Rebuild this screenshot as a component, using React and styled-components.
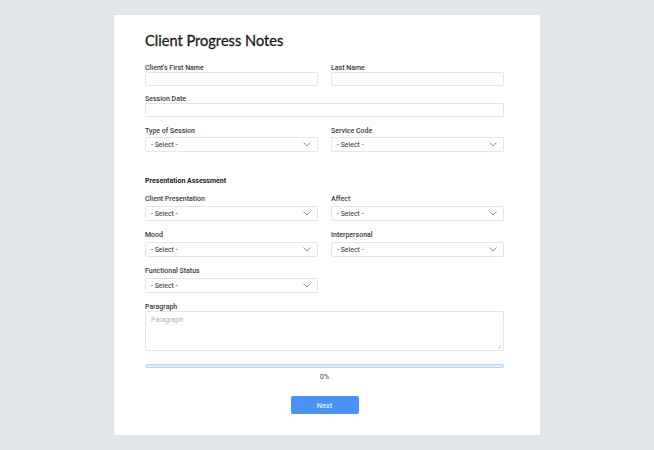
import React from "react";
import styled, { createGlobalStyle } from "styled-components";

const Global = createGlobalStyle`
  html, body { margin: 0; padding: 0; background: #e2e6ea; }
  body { font-family: Roboto, "Liberation Sans", sans-serif; color: #333; }
  * { box-sizing: border-box; }
`;

const Card = styled.div`
  width: 426px;
  height: 420px;
  margin: 15px auto 0;
  background: #fff;
  padding: 16px 36px 0 31px;
  display: flex;
  flex-direction: column;
`;

const Title = styled.h1`
  margin: 0;
  font-family: Lato, Inter, sans-serif;
  font-weight: 400;
  font-size: 14.6px;
  line-height: 20px;
  color: #1a1a1a;
  -webkit-text-stroke: 0.3px #1a1a1a;
`;

const Grid = styled.div`
  display: grid;
  grid-template-columns: ${(p) => (p.$single ? "1fr" : "1fr 1fr")};
  column-gap: 13px;
  margin-top: ${(p) => p.$mt}px;
`;

const Field = styled.div`
  display: flex;
  flex-direction: column;
`;

const Label = styled.label`
  font-size: 7px;
  line-height: 12px;
  font-weight: 500;
  color: #3a3a3a;
  margin-bottom: ${(p) => (p.$mb || 0) - 2}px;
`;

const Input = styled.div`
  height: 14px;
  border: 1px solid #e6e6e6;
  border-radius: 2px;
  background: #fff;
`;

const SelectBox = styled.div`
  height: 15px;
  border: 1px solid #e6e6e6;
  border-radius: 2px;
  background: #fff;
  display: flex;
  align-items: center;
  justify-content: space-between;
  padding: 0 6px 0 5px;
  font-size: 7px;
  color: #333;
`;

const TextArea = styled.div`
  position: relative;
  height: 40px;
  border: 1px solid #e6e6e6;
  border-radius: 2px;
  padding: 3px 5px;
  font-size: 7px;
  line-height: 10px;
  color: #a9b0bb;
`;

const Grip = styled.svg`
  position: absolute;
  right: 1px;
  bottom: 1px;
`;

const SectionTitle = styled.div`
  margin-top: 23px;
  font-size: 7px;
  line-height: 12px;
  margin-bottom: -2px;
  font-weight: 700;
  color: #222;
`;

const Progress = styled.div`
  margin-top: 13px;
  height: 4px;
  border: 1px solid #b9d3fb;
  border-radius: 2px;
  background: #e4eefd;
`;

const Percent = styled.div`
  margin-top: 4px;
  text-align: center;
  font-size: 7px;
  line-height: 11px;
  color: #444;
`;

const Button = styled.button`
  align-self: center;
  margin-top: 13px;
  width: 68px;
  height: 18px;
  border: none;
  border-radius: 2px;
  background: #4a90f7;
  color: #fff;
  font-family: Roboto, sans-serif;
  font-size: 7.5px;
  padding: 0;
`;

const Chevron = () => (
  <svg width="8" height="5" viewBox="0 0 8 5">
    <path d="M0.5 0.5 L4 4 L7.5 0.5" fill="none" stroke="#777" strokeWidth="0.8" />
  </svg>
);

const Select = ({ label, mbLabel = 3 }) => (
  <Field>
    <Label $mb={mbLabel}>{label}</Label>
    <SelectBox>
      <span>- Select -</span>
      <Chevron />
    </SelectBox>
  </Field>
);

const TextField = ({ label }) => (
  <Field>
    <Label>{label}</Label>
    <Input />
  </Field>
);

export default function App() {
  return (
    <>
      <Global />
      <Card>
        <Title>Client Progress Notes</Title>
        <Grid $mt={11}>
          <TextField label="Client's First Name" />
          <TextField label="Last Name" />
        </Grid>
        <Grid $mt={7} $single>
          <TextField label="Session Date" />
        </Grid>
        <Grid $mt={8}>
          <Select label="Type of Session" mbLabel={2} />
          <Select label="Service Code" mbLabel={2} />
        </Grid>
        <SectionTitle>Presentation Assessment</SectionTitle>
        <Grid $mt={8}>
          <Select label="Client Presentation" />
          <Select label="Affect" />
        </Grid>
        <Grid $mt={8}>
          <Select label="Mood" />
          <Select label="Interpersonal" />
        </Grid>
        <Grid $mt={8}>
          <Select label="Functional Status" />
          <div />
        </Grid>
        <Grid $mt={8} $single>
          <Field>
            <Label>Paragraph</Label>
            <TextArea>
              Paragraph
              <Grip width="5" height="5" viewBox="0 0 5 5">
                <path d="M4.5 1 L1 4.5 M4.5 3 L3 4.5" stroke="#999" strokeWidth="0.6" />
              </Grip>
            </TextArea>
          </Field>
        </Grid>
        <Progress />
        <Percent>0%</Percent>
        <Button>Next</Button>
      </Card>
    </>
  );
}
